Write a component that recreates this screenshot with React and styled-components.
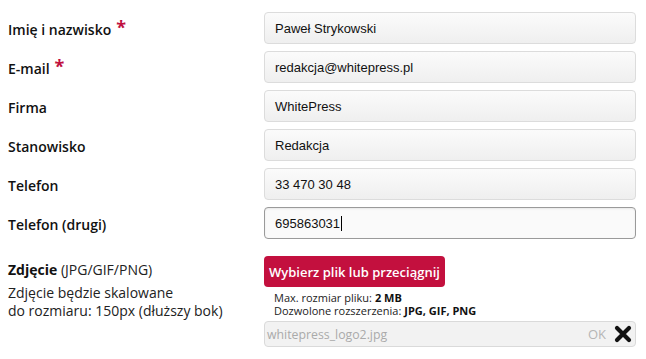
import React from "react";
import styled, { createGlobalStyle } from "styled-components";

const Global = createGlobalStyle`
  html, body { margin: 0; padding: 0; background: #fff; }
  body { font-family: "Open Sans", "Liberation Sans", sans-serif; color: #111; }
`;

const Form = styled.div`
  display: grid;
  grid-template-columns: 256px 372px;
  row-gap: 7px;
  padding: 12px 0 0 8px;
`;

const Label = styled.div`
  display: flex;
  align-items: center;
  box-sizing: border-box;
  height: 32px;
  padding-top: 3px;
  font-size: 14px;
  font-weight: 600;
  color: #111;
`;

const Star = styled.span`
  color: #c0103f;
  font-size: 18px;
  font-weight: 700;
  margin-left: 5px;
  position: relative;
  top: -3px;
  line-height: 1;
`;

const Input = styled.div`
  box-sizing: border-box;
  height: 32px;
  display: flex;
  align-items: center;
  padding: 0 10px;
  border: 1px solid ${(p) => (p.$focused ? "#9a9a9a" : "#dcdcdc")};
  border-radius: 4px;
  background: ${(p) =>
    p.$focused ? "#fafafa" : "linear-gradient(#fbfbfb, #efefef)"};
  box-shadow: ${(p) => (p.$focused ? "inset 0 1px 2px rgba(0,0,0,0.08)" : "none")};
  font-family: "Liberation Sans", Arial, sans-serif;
  font-size: 13px;
  color: #111;
`;

const Caret = styled.span`
  display: inline-block;
  width: 1px;
  height: 15px;
  background: #000;
  margin-left: 1px;
`;

const PhotoLabel = styled.div`
  grid-column: 1;
  padding-top: 15px;
  font-size: 14px;
  line-height: 18px;
  color: #222;
`;

const PhotoTitle = styled.div`
  margin-bottom: 5px;
  b { font-weight: 700; color: #111; }
`;

const PhotoField = styled.div`
  display: flex;
  flex-direction: column;
  align-items: flex-start;
  padding-top: 10px;
`;

const UploadButton = styled.button`
  height: 31px;
  padding: 0 5px;
  border: none;
  border-radius: 4px;
  background: #c3103e;
  color: #fff;
  font-family: "Open Sans", sans-serif;
  font-size: 13px;
  font-weight: 600;
`;

const Hint = styled.div`
  margin: 4px 0 0 10px;
  font-size: 11px;
  color: #222;
`;

const HintLine = styled.div`
  display: flex;
  gap: 3px;
  height: 13px;
  line-height: 13px;
  white-space: nowrap;
`;

const HintValue = styled.span`
  font-weight: 700;
  color: #111;
`;

const FileBox = styled.div`
  box-sizing: border-box;
  margin-top: 4px;
  width: 372px;
  height: 26px;
  display: flex;
  align-items: center;
  padding: 0 3px 0 2px;
  border: 1px solid #dadada;
  border-radius: 4px;
  background: #f2f2f2;
  font-size: 12.3px;
  color: #aaa;
`;

const FileName = styled.span`
  flex: 1;
`;

const Ok = styled.span`
  color: #b5b5b5;
  font-size: 13px;
  margin-right: 8px;
`;

const fields = [
  { label: "Imię i nazwisko", required: true, value: "Paweł Strykowski" },
  { label: "E-mail", required: true, value: "redakcja@whitepress.pl" },
  { label: "Firma", value: "WhitePress" },
  { label: "Stanowisko", value: "Redakcja" },
  { label: "Telefon", value: "33 470 30 48" },
  { label: "Telefon (drugi)", value: "695863031", focused: true },
];

export default function App() {
  return (
    <>
      <Global />
      <Form>
        {fields.map((f) => (
          <React.Fragment key={f.label}>
            <Label>
              {f.label}
              {f.required && <Star>*</Star>}
            </Label>
            <Input $focused={f.focused}>
              {f.value}
              {f.focused && <Caret />}
            </Input>
          </React.Fragment>
        ))}
        <PhotoLabel>
          <PhotoTitle>
            <b>Zdjęcie</b> (JPG/GIF/PNG)
          </PhotoTitle>
          Zdjęcie będzie skalowane
          <br />
          do rozmiaru: 150px (dłuższy bok)
        </PhotoLabel>
        <PhotoField>
          <UploadButton>Wybierz plik lub przeciągnij</UploadButton>
          <Hint>
            <HintLine>
              <span>Max. rozmiar pliku:</span>
              <HintValue>2 MB</HintValue>
            </HintLine>
            <HintLine>
              <span>Dozwolone rozszerzenia:</span>
              <HintValue>JPG, GIF, PNG</HintValue>
            </HintLine>
          </Hint>
          <FileBox>
            <FileName>whitepress_logo2.jpg</FileName>
            <Ok>OK</Ok>
            <svg width="18" height="18" viewBox="0 0 18 18">
              <path
                d="M3 3 L15 15 M15 3 L3 15"
                stroke="#111"
                strokeWidth="4.2"
                strokeLinecap="round"
              />
            </svg>
          </FileBox>
        </PhotoField>
      </Form>
    </>
  );
}
